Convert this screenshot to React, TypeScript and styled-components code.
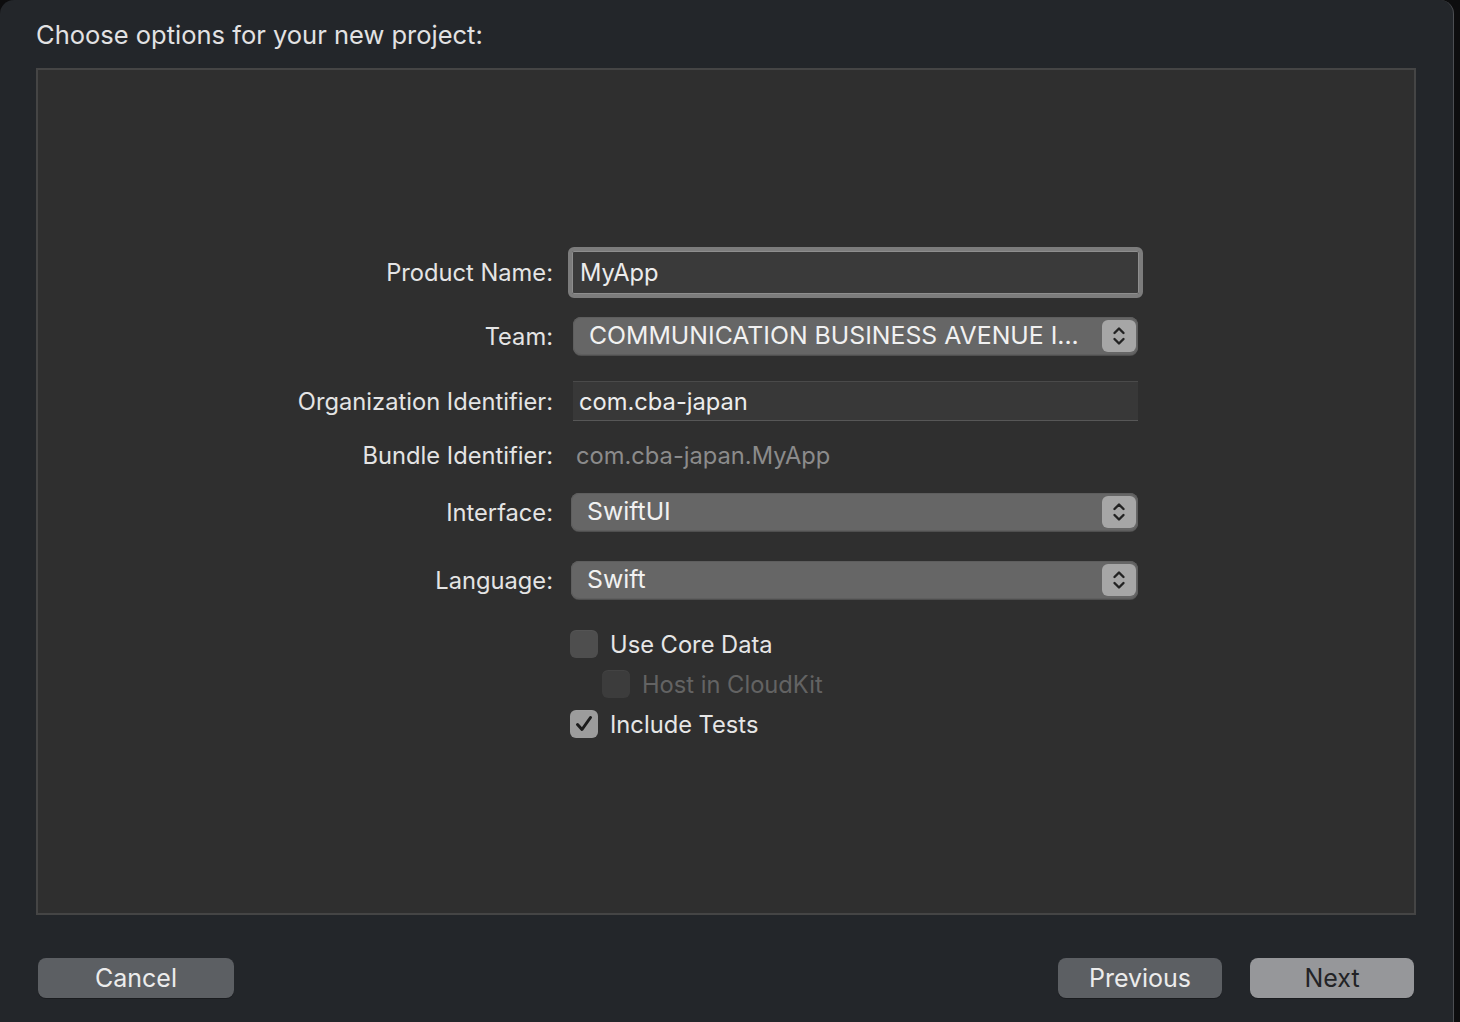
import React from "react";
import styled, { createGlobalStyle } from "styled-components";

const Global = createGlobalStyle`
  html, body { margin: 0; padding: 0; background: #0d0d0e; }
  body { font-family: Inter, "Noto Sans", "Liberation Sans", sans-serif; -webkit-font-smoothing: antialiased; }
  #root { width: 1460px; height: 1022px; overflow: hidden; }
`;

const Window = styled.div`
  width: 1454px;
  height: 1040px;
  box-sizing: border-box;
  background: #23262a;
  border-radius: 14px 14px 0 0;
  border-right: 1px solid #4c4e52;
  display: flex;
  flex-direction: column;
  padding: 20px 0 0 0;
`;

const Title = styled.div`
  font-size: 25.5px;
  line-height: 30px;
  color: #e2e2e3;
  padding-left: 36px;
`;

const Panel = styled.div`
  margin: 18px 37px 0 36px;
  height: 847px;
  box-sizing: border-box;
  background: #2f2f2f;
  border: 2px solid #454545;
  display: flex;
  flex-direction: column;
  justify-content: center;
`;

const Form = styled.div`
  display: flex;
  flex-direction: column;
  margin-top: 2px;
`;

const Row = styled.div<{ $mt?: number; $h: number }>`
  display: flex;
  align-items: center;
  gap: 18px;
  height: ${(p) => p.$h}px;
  margin-top: ${(p) => p.$mt ?? 0}px;
`;

const Label = styled.div`
  width: 515px;
  text-align: right;
  font-size: 23.7px;
  color: #e4e4e4;
  flex: none;
`;

const Control = styled.div`
  width: 567px;
  flex: none;
  display: flex;
  align-items: center;
`;

const FocusField = styled.div`
  margin-left: -3px;
  width: 575px;
  flex: none;
  height: 51px;
  box-sizing: border-box;
  border: 4px solid #7c7c7c;
  border-radius: 6px;
  background: #3a3a3a;
  box-shadow: inset 0 0 0 1px #8e8e8e;
  display: flex;
  align-items: center;
  padding-left: 8px;
  font-size: 23.7px;
  color: #ececec;
`;

const TextField = styled.div`
  margin-left: 2px;
  width: 565px;
  flex: none;
  height: 40px;
  box-sizing: border-box;
  background: #383838;
  border-top: 1px solid #4a4a4a;
  border-bottom: 1px solid #575757;
  display: flex;
  align-items: center;
  padding-left: 6px;
  font-size: 23.7px;
  color: #ececec;
`;

const Value = styled.div`
  padding-left: 5px;
  font-size: 23.7px;
  color: #8b8b8b;
`;

const Popup = styled.div<{ $ml: number }>`
  margin-left: ${(p) => p.$ml}px;
  flex: 1;
  height: 38px;
  box-sizing: border-box;
  background: #666666;
  border-radius: 8px;
  box-shadow: 0 1px 0 #4f4f4f, inset 0 0 0 1px #5e5e5e;
  display: flex;
  align-items: center;
  justify-content: space-between;
  padding: 0 2px 0 16px;
  font-size: 24.8px;
  color: #f1f1f1;
`;

const PopupText = styled.span`
  white-space: nowrap;
  overflow: hidden;
  margin-top: -2px;
`;

const Stepper = styled.div`
  width: 34px;
  height: 32px;
  border-radius: 6px;
  background: #a6a6a6;
  display: flex;
  align-items: center;
  justify-content: center;
  flex: none;
`;

const CheckRow = styled.label<{ $indent?: number; $mt?: number }>`
  display: flex;
  align-items: center;
  gap: 12px;
  height: 28px;
  margin-top: ${(p) => p.$mt ?? 0}px;
  padding-left: ${(p) => 532 + (p.$indent ?? 0)}px;
  font-size: 23.7px;
  color: #e6e6e6;
`;

const Box = styled.span<{ $state: "off" | "on" | "disabled" }>`
  width: 28px;
  height: 28px;
  border-radius: 6px;
  box-sizing: border-box;
  flex: none;
  display: flex;
  align-items: center;
  justify-content: center;
  background: ${(p) =>
    p.$state === "on" ? "#9c9c9c" : p.$state === "disabled" ? "#3c3c3c" : "#4e4e4e"};
  box-shadow: inset 0 1px 0 rgba(255, 255, 255, 0.04);
`;

const CheckText = styled.span<{ $disabled?: boolean }>`
  color: ${(p) => (p.$disabled ? "#636363" : "#e6e6e6")};
`;

const Footer = styled.div`
  display: flex;
  align-items: center;
  justify-content: space-between;
  margin-top: 43px;
  padding: 0 39px 0 38px;
`;

const RightButtons = styled.div`
  display: flex;
  gap: 28px;
`;

const Button = styled.div<{ $w: number; $primary?: boolean }>`
  width: ${(p) => p.$w}px;
  height: 40px;
  border-radius: 8px;
  background: ${(p) => (p.$primary ? "#96979a" : "#5c5f63")};
  color: ${(p) => (p.$primary ? "#222326" : "#ececec")};
  font-size: 25px;
  display: flex;
  align-items: center;
  justify-content: center;
  box-shadow: 0 1px 0 rgba(0, 0, 0, 0.25);
`;

const Chevrons = () => (
  <svg width="16" height="22" viewBox="0 0 16 22" fill="none">
    <path d="M3.5 8 L8 3.5 L12.5 8" stroke="#222" strokeWidth="2.4" strokeLinecap="round" strokeLinejoin="round" />
    <path d="M3.5 14 L8 18.5 L12.5 14" stroke="#222" strokeWidth="2.4" strokeLinecap="round" strokeLinejoin="round" />
  </svg>
);

const Check = () => (
  <svg width="20" height="20" viewBox="0 0 20 20" fill="none">
    <path d="M3.5 10.5 L8 15.5 L16.5 3.5" stroke="#1c1c1c" strokeWidth="3" strokeLinecap="round" strokeLinejoin="round" />
  </svg>
);

export default function App() {
  return (
    <>
      <Global />
      <Window>
        <Title>Choose options for your new project:</Title>
        <Panel>
          <Form>
            <Row $h={51}>
              <Label>Product Name:</Label>
              <Control>
                <FocusField>MyApp</FocusField>
              </Control>
            </Row>
            <Row $h={38} $mt={19}>
              <Label>Team:</Label>
              <Control>
                <Popup $ml={2}>
                  <PopupText>COMMUNICATION BUSINESS AVENUE I...</PopupText>
                  <Stepper><Chevrons /></Stepper>
                </Popup>
              </Control>
            </Row>
            <Row $h={40} $mt={26}>
              <Label>Organization Identifier:</Label>
              <Control>
                <TextField>com.cba-japan</TextField>
              </Control>
            </Row>
            <Row $h={40} $mt={14}>
              <Label>Bundle Identifier:</Label>
              <Control>
                <Value>com.cba-japan.MyApp</Value>
              </Control>
            </Row>
            <Row $h={38} $mt={18}>
              <Label>Interface:</Label>
              <Control>
                <Popup $ml={0}>
                  <PopupText>SwiftUI</PopupText>
                  <Stepper><Chevrons /></Stepper>
                </Popup>
              </Control>
            </Row>
            <Row $h={38} $mt={30}>
              <Label>Language:</Label>
              <Control>
                <Popup $ml={0}>
                  <PopupText>Swift</PopupText>
                  <Stepper><Chevrons /></Stepper>
                </Popup>
              </Control>
            </Row>
            <CheckRow $mt={31}>
              <Box $state="off" />
              <CheckText>Use Core Data</CheckText>
            </CheckRow>
            <CheckRow $mt={12} $indent={32}>
              <Box $state="disabled" />
              <CheckText $disabled>Host in CloudKit</CheckText>
            </CheckRow>
            <CheckRow $mt={12}>
              <Box $state="on"><Check /></Box>
              <CheckText>Include Tests</CheckText>
            </CheckRow>
          </Form>
        </Panel>
        <Footer>
          <Button $w={196}>Cancel</Button>
          <RightButtons>
            <Button $w={164}>Previous</Button>
            <Button $w={164} $primary>Next</Button>
          </RightButtons>
        </Footer>
      </Window>
    </>
  );
}
